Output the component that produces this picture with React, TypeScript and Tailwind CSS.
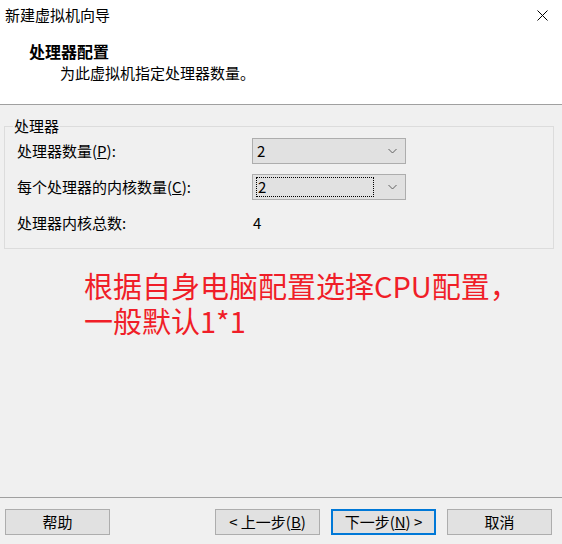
import React from 'react';

const font = { fontFamily: '"Noto Sans CJK SC", "Noto Sans", sans-serif' };

const Select = ({ value, focused }: { value: string; focused?: boolean }) => (
  <div className="w-[154px] h-[26px] border border-[#adadad] bg-[#e1e1e1] flex items-center pl-[3px] pr-[8px]">
    <div className={`flex-1 h-[20px] flex items-center pl-[1px] text-[15px] text-black ${focused ? 'border border-dotted border-black mr-[14px]' : 'mr-[16px]'}`}>
      {value}
    </div>
    <svg width="9" height="6" viewBox="0 0 9 6" className="text-[#606060]">
      <path d="M0.5 1 L4.5 5 L8.5 1" fill="none" stroke="currentColor" strokeWidth="1" />
    </svg>
  </div>
);

const Btn = ({ children, primary }: { children: React.ReactNode; primary?: boolean }) => (
  <button
    className={`w-[105px] h-[26px] bg-[#e1e1e1] text-[15px] text-black flex items-center justify-center ${
      primary ? 'border-2 border-[#0078d7]' : 'border border-[#adadad]'
    }`}
  >
    {children}
  </button>
);

export default function App() {
  return (
    <div className="w-[562px] h-[544px] bg-[#f0f0f0] flex flex-col text-black" style={font}>
      {/* title bar */}
      <div className="h-[30px] bg-white flex items-center justify-between pl-[5px] pr-[14px]">
        <span className="text-[15px]">新建虚拟机向导</span>
        <svg width="11" height="11" viewBox="0 0 11 11">
          <path d="M0.5 0.5 L10.5 10.5 M10.5 0.5 L0.5 10.5" stroke="#000" strokeWidth="1" />
        </svg>
      </div>

      {/* header */}
      <div className="h-[75px] bg-white border-b border-[#a0a0a0] pt-[10px] pl-[29px]">
        <div className="text-[16px] font-bold leading-[22px]">处理器配置</div>
        <div className="text-[15px] leading-[22px] pl-[31px]">为此虚拟机指定处理器数量。</div>
      </div>

      {/* body */}
      <div className="flex-1 flex flex-col">
        <fieldset className="ml-[4px] mt-[12px] w-[550px] h-[132px] border border-[#dcdcdc] px-0">
          <legend className="text-[15px] ml-[8px] px-[1px] leading-[18px]">处理器</legend>
          <div className="grid grid-cols-[235px_1fr] items-center text-[15px] gap-y-[10px] pt-[3px] pl-[12px]">
            <span>
              处理器数量(<span className="underline">P</span>):
            </span>
            <Select value="2" />
            <span>
              每个处理器的内核数量(<span className="underline">C</span>):
            </span>
            <Select value="2" focused />
            <span className="leading-[26px]">处理器内核总数:</span>
            <span className="pl-[1px]">4</span>
          </div>
        </fieldset>

        <div className="pl-[84px] mt-[19px] text-[29px] leading-[35px] text-[#f01e28] flex flex-col">
          <span>根据自身电脑配置选择CPU配置，</span>
          <span>一般默认1*1</span>
        </div>
      </div>

      {/* footer */}
      <div className="h-[47px] border-t border-[#a0a0a0] flex items-start pt-[11px] pl-[5px] pr-[10px]">
        <Btn>帮助</Btn>
        <div className="flex-1" />
        <div className="flex gap-[11px]">
          <Btn>
            &lt; 上一步(<span className="underline">B</span>)
          </Btn>
          <Btn primary>
            下一步(<span className="underline">N</span>) &gt;
          </Btn>
          <Btn>取消</Btn>
        </div>
      </div>
    </div>
  );
}
